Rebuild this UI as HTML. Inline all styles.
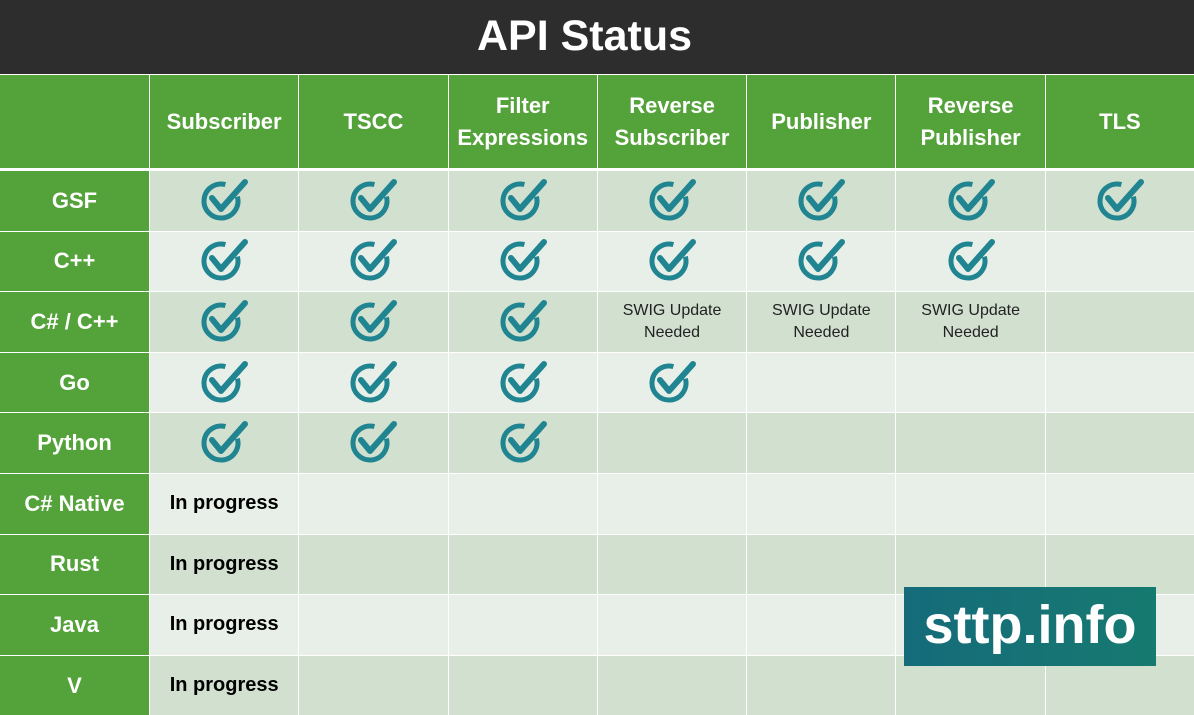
<!DOCTYPE html>
<html><head><meta charset="utf-8"><style>
body{margin:0;width:1194px;height:713px;overflow:hidden;background:#fff;font-family:"Liberation Sans",sans-serif}
.title{position:absolute;left:0;top:0;width:1194px;height:74px;background:#2d2d2d;color:#fff;font-weight:bold;font-size:43px;line-height:74px}
.title span{position:absolute;left:477px;top:-1px}
.hdr{position:absolute;top:75px;left:0;display:grid;grid-template-columns:149px repeat(7,148.3px);column-gap:1px;height:93px}
.hdr div{background:#54a23a;color:#fff;font-weight:bold;font-size:22px;display:flex;align-items:center;justify-content:center;text-align:center;line-height:32px}
.body{position:absolute;top:171px;left:0;display:grid;grid-template-columns:149px repeat(7,148.3px);column-gap:1px;row-gap:1px;grid-auto-rows:59.6px}
.body div{display:flex;align-items:center;justify-content:center;text-align:center}
.body .l{background:#54a23a;color:#fff;font-weight:bold;font-size:22px}
.d{background:#d1e0cf}.e{background:#e8efe8}
.ip{font-weight:bold;font-size:20px;color:#000}
.sw{font-size:16px;color:#222;line-height:22px}
svg{width:52px;height:48px;margin-top:2px}
.logo{position:absolute;left:904px;top:587px;width:252px;height:79px;background:linear-gradient(90deg,#156b7a,#167a70);color:#fff;font-weight:bold;font-size:54px;text-align:center;line-height:76px}
</style></head><body>
<svg style="display:none"><symbol id="c" viewBox="0 0 52 48"><path d="M39.4 18.6 A17 17 0 1 1 27.4 6.6" fill="none" stroke="#208591" stroke-width="5"/><path d="M14 20 L23 31 L47 4" fill="none" stroke="#208591" stroke-width="6" stroke-linecap="round" stroke-linejoin="round"/></symbol></svg>
<div class="title"><span>API Status</span></div>
<div class="hdr"><div></div><div>Subscriber</div><div>TSCC</div><div>Filter<br>Expressions</div><div>Reverse<br>Subscriber</div><div>Publisher</div><div>Reverse<br>Publisher</div><div>TLS</div></div>
<div class="body">
<div class="l">GSF</div><div class="d"><svg><use href="#c"/></svg></div><div class="d"><svg><use href="#c"/></svg></div><div class="d"><svg><use href="#c"/></svg></div><div class="d"><svg><use href="#c"/></svg></div><div class="d"><svg><use href="#c"/></svg></div><div class="d"><svg><use href="#c"/></svg></div><div class="d"><svg><use href="#c"/></svg></div>
<div class="l">C++</div><div class="e"><svg><use href="#c"/></svg></div><div class="e"><svg><use href="#c"/></svg></div><div class="e"><svg><use href="#c"/></svg></div><div class="e"><svg><use href="#c"/></svg></div><div class="e"><svg><use href="#c"/></svg></div><div class="e"><svg><use href="#c"/></svg></div><div class="e"></div>
<div class="l">C# / C++</div><div class="d"><svg><use href="#c"/></svg></div><div class="d"><svg><use href="#c"/></svg></div><div class="d"><svg><use href="#c"/></svg></div><div class="d sw">SWIG Update<br>Needed</div><div class="d sw">SWIG Update<br>Needed</div><div class="d sw">SWIG Update<br>Needed</div><div class="d"></div>
<div class="l">Go</div><div class="e"><svg><use href="#c"/></svg></div><div class="e"><svg><use href="#c"/></svg></div><div class="e"><svg><use href="#c"/></svg></div><div class="e"><svg><use href="#c"/></svg></div><div class="e"></div><div class="e"></div><div class="e"></div>
<div class="l">Python</div><div class="d"><svg><use href="#c"/></svg></div><div class="d"><svg><use href="#c"/></svg></div><div class="d"><svg><use href="#c"/></svg></div><div class="d"></div><div class="d"></div><div class="d"></div><div class="d"></div>
<div class="l">C# Native</div><div class="e ip">In progress</div><div class="e"></div><div class="e"></div><div class="e"></div><div class="e"></div><div class="e"></div><div class="e"></div>
<div class="l">Rust</div><div class="d ip">In progress</div><div class="d"></div><div class="d"></div><div class="d"></div><div class="d"></div><div class="d"></div><div class="d"></div>
<div class="l">Java</div><div class="e ip">In progress</div><div class="e"></div><div class="e"></div><div class="e"></div><div class="e"></div><div class="e"></div><div class="e"></div>
<div class="l">V</div><div class="d ip">In progress</div><div class="d"></div><div class="d"></div><div class="d"></div><div class="d"></div><div class="d"></div><div class="d"></div>
</div>
<div class="logo">sttp.info</div>
</body></html>
